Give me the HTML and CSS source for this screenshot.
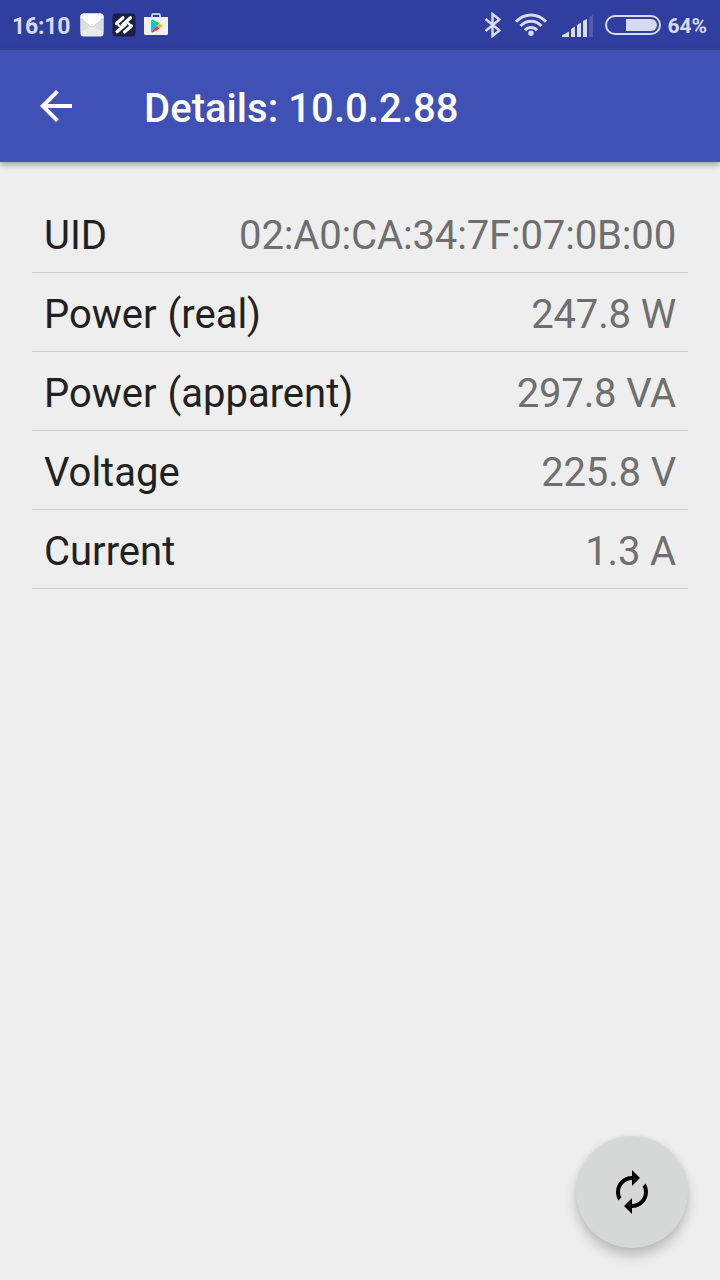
FILE: index.html
```html
<!DOCTYPE html>
<html lang="en">
<head>
  <meta charset="UTF-8" />
  <meta name="viewport" content="width=device-width, initial-scale=1.0" />
  <title>Details: 10.0.2.88</title>
  <link rel="stylesheet" href="styles.css">
</head>
<body>
  <div class="status-bar">
    <span class="clock">16:10</span>
    <div class="notifications">
      <svg width="24" height="24" viewBox="0 0 24 24">
        <rect x="0.5" y="0.5" width="23" height="23" rx="3" fill="#ebebeb"/>
        <path d="M0.5 4v15L12 13z M23.5 4v15L12 13z" fill="#dedede"/>
        <path d="M0.5 5V3.5Q0.5 0.5 3.5 0.5H20.5Q23.5 0.5 23.5 3.5V5L13.5 13.5Q12 14.5 10.5 13.5z" fill="#fff"/>
        <path d="M1 5L10.5 13.5Q12 14.5 13.5 13.5L23 5" fill="none" stroke="#c9c9c9" stroke-width="0.8"/>
      </svg>
      <svg width="24" height="24" viewBox="0 0 24 24">
        <rect x="0.5" y="0.5" width="23" height="23" rx="3.5" fill="#1a2140"/>
        <g fill="none" stroke="#fff" stroke-width="3.2" stroke-linecap="round">
          <path d="M4.5 10.5L11 4.8M10.5 12L18.5 4.8M5 18.8L13.5 11.5M12.500 19L19.500 13"/>
          <path d="M5 10.5L8 13.5M16 10.200L19 13" stroke-width="2.4"/>
        </g>
      </svg>
      <svg width="24" height="24" viewBox="0 0 24 24">
        <path d="M8 5V2Q8 1 9 1H15Q16 1 16 2V5" fill="none" stroke="#f1f1f1" stroke-width="1.5"/>
        <path d="M0 4H24V20.5Q24 22 22.5 22H1.5Q0 22 0 20.5z" fill="#f1f1f1"/>
        <path d="M7 7V19L13 13z" fill="#00c8e6"/>
        <path d="M7 7L13 13L15.5 10.5L8.5 6.5z" fill="#00d47b"/>
        <path d="M15.5 10.5L13 13L15.5 15.5L19 13z" fill="#ffc107"/>
        <path d="M7 19L13 13L15.5 15.5L8.5 19.5z" fill="#f1304d"/>
      </svg>
    </div>
    <div class="indicators">
      <svg class="bluetooth" width="18" height="26" viewBox="0 0 18 26">
        <path d="M1.5 7L15.5 18.5L8.5 24V2L15.5 7.5L1.5 19" fill="none" stroke="#d8dbf0" stroke-width="2.4"/>
      </svg>
      <svg class="wifi" width="32" height="24" viewBox="0 0 32 24">
        <g fill="none" stroke="#d8dbf0" stroke-width="3">
          <path d="M1 8.7Q7.5 2 16 2T31 8.7"/>
          <path d="M5.5 13Q10 8.3 16 8.3T26.5 13"/>
          <path d="M10 17.3Q12.5 14.5 16 14.5T22 17.3"/>
        </g>
        <circle cx="16" cy="20.3" r="2.7" fill="#d8dbf0"/>
      </svg>
      <svg class="signal" width="31" height="22" viewBox="0 0 31 22">
        <path d="M0 22V20.5L7 16.5V22zM9 22V14L13 11.5V22zM15 22V10L19 7.5V22zM21 22V6L25 4V22z" fill="#d8dbf0"/>
        <path d="M27 22V2L31 0V22z" fill="#505cae"/>
      </svg>
      <svg class="battery" width="56" height="20" viewBox="0 0 56 20">
        <rect x="1" y="1" width="54" height="18" rx="9" fill="none" stroke="#d8dbf0" stroke-width="2"/>
        <path d="M21 4H46a6 6 0 0 1 0 12H21z" fill="#d8dbf0"/>
      </svg>
      <span class="percent">64%</span>
    </div>
  </div>

  <header class="toolbar">
    <button class="back-btn" aria-label="Back">
      <svg width="48" height="48" viewBox="0 0 24 24">
        <path d="M20 11H7.83l5.59-5.59L12 4l-8 8 8 8 1.41-1.41L7.83 13H20v-2z" fill="#fff"/>
      </svg>
    </button>
    <h1>Details: 10.0.2.88</h1>
  </header>

  <main class="details">
    <div class="row"><span class="label">UID</span><span class="value">02:A0:CA:34:7F:07:0B:00</span></div>
    <div class="row"><span class="label">Power (real)</span><span class="value">247.8 W</span></div>
    <div class="row"><span class="label">Power (apparent)</span><span class="value">297.8 VA</span></div>
    <div class="row"><span class="label">Voltage</span><span class="value">225.8 V</span></div>
    <div class="row"><span class="label">Current</span><span class="value">1.3 A</span></div>
  </main>

  <button class="fab" aria-label="Refresh">
    <svg width="48" height="48" viewBox="0 0 24 24">
      <path d="M12 6v3l4-4-4-4v3c-4.42 0-8 3.58-8 8 0 1.57.46 3.03 1.24 4.26L6.7 14.8c-.45-.83-.7-1.79-.7-2.8 0-3.31 2.69-6 6-6zm6.76 1.74L17.3 9.2c.44.84.7 1.79.7 2.8 0 3.31-2.69 6-6 6v-3l-4 4 4 4v-3c4.42 0 8-3.58 8-8 0-1.57-.46-3.03-1.24-4.26z"/>
    </svg>
  </button>
</body>
</html>
```
FILE: styles.css
```css
* {
  margin: 0;
  padding: 0;
  box-sizing: border-box;
  font-family: Roboto, sans-serif;
}
body {
  background-color: #eeeeee;
  height: 100vh;
  display: flex;
  flex-direction: column;
  overflow: hidden;
}
svg {
  display: block;
  flex-shrink: 0;
}
button {
  border: none;
  background: none;
  cursor: pointer;
}
.status-bar {
  height: 50px;
  padding: 0 13px 0 12px;
  background-color: #303f9f;
  color: #d8dbf0;
  display: flex;
  align-items: center;
}
.clock {
  width: 68px;
  padding-top: 3px;
  font-size: 23px;
  font-weight: 700;
  letter-spacing: -0.2px;
  line-height: 52px;
}
.notifications {
  display: flex;
  gap: 8px;
}
.indicators {
  margin-left: auto;
  display: flex;
  align-items: center;
}
.wifi {
  margin-left: 13px;
}
.signal {
  margin: 1px 12px 0 15px;
}
.percent {
  margin-left: 6px;
  padding-top: 2px;
  font-size: 21px;
  font-weight: 700;
  line-height: 52px;
}
.toolbar {
  height: 112px;
  padding-left: 32px;
  background-color: #3f51b5;
  box-shadow: 0 3px 6px rgba(0,0,0,0.3);
  display: flex;
  align-items: center;
}
.toolbar h1 {
  margin-left: 64px;
  padding-top: 4px;
  color: #fff;
  font-size: 40px;
  font-weight: 500;
  letter-spacing: 0.05px;
}
.details {
  padding: 32px;
}
.row {
  height: 79px;
  padding: 4px 12px 0;
  border-bottom: 1px solid #cecece;
  display: flex;
  justify-content: space-between;
  align-items: center;
  font-size: 40px;
}
.label {
  color: #212121;
  word-spacing: 1px;
}
.value {
  color: #6f6f6f;
  letter-spacing: -0.15px;
}
.fab {
  width: 112px;
  height: 112px;
  margin: auto 32px 32px auto;
  border-radius: 50%;
  background-color: #d6d8d7;
  box-shadow: 0 8px 12px rgba(0,0,0,0.2), 0 0 4px rgba(0,0,0,0.08);
  display: flex;
  align-items: center;
  justify-content: center;
}
```
